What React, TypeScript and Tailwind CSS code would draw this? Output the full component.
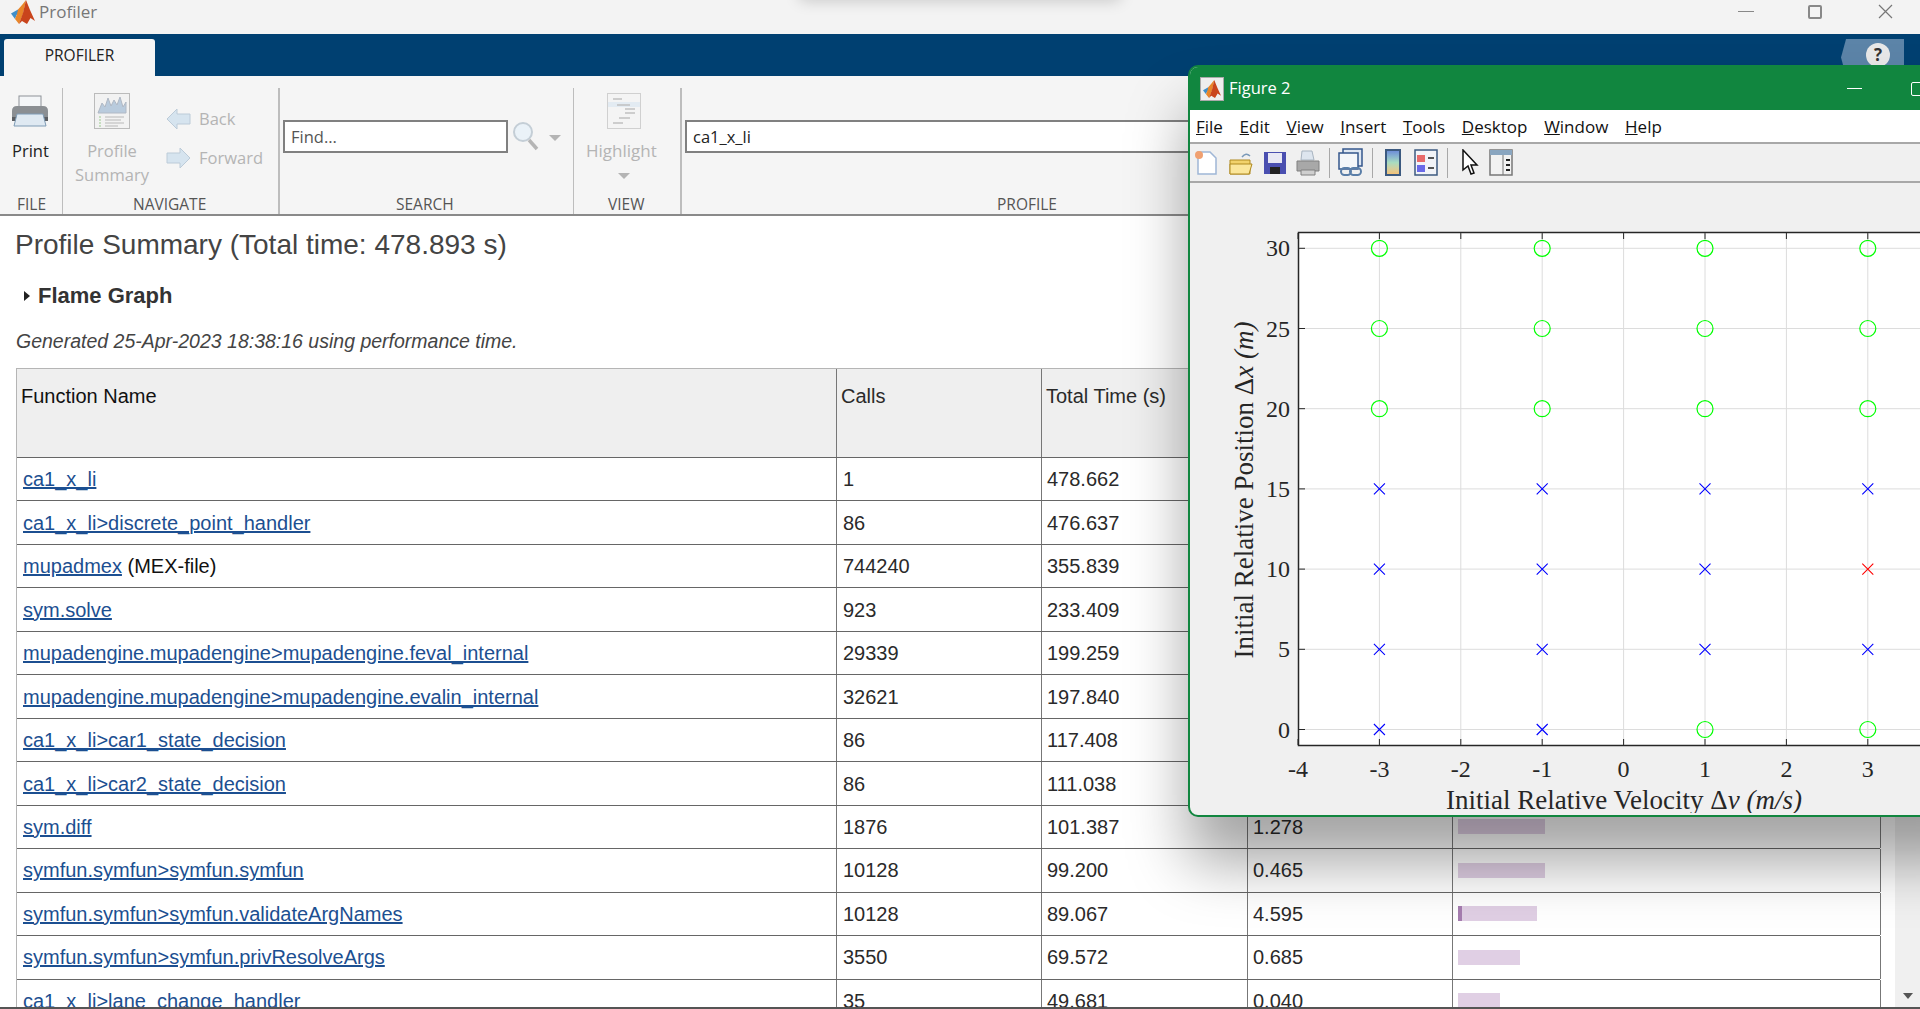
import React from "react";

const rows = [
  { name: "ca1_x_li", calls: "1", total: "478.662" },
  { name: "ca1_x_li>discrete_point_handler", calls: "86", total: "476.637" },
  { name: "mupadmex", suffix: " (MEX-file)", calls: "744240", total: "355.839" },
  { name: "sym.solve", calls: "923", total: "233.409" },
  { name: "mupadengine.mupadengine>mupadengine.feval_internal", calls: "29339", total: "199.259" },
  { name: "mupadengine.mupadengine>mupadengine.evalin_internal", calls: "32621", total: "197.840" },
  { name: "ca1_x_li>car1_state_decision", calls: "86", total: "117.408" },
  { name: "ca1_x_li>car2_state_decision", calls: "86", total: "111.038" },
  { name: "sym.diff", calls: "1876", total: "101.387", self: "1.278", bar: 87, dark: 0 },
  { name: "symfun.symfun>symfun.symfun", calls: "10128", total: "99.200", self: "0.465", bar: 87, dark: 0 },
  { name: "symfun.symfun>symfun.validateArgNames", calls: "10128", total: "89.067", self: "4.595", bar: 79, dark: 4 },
  { name: "symfun.symfun>symfun.privResolveArgs", calls: "3550", total: "69.572", self: "0.685", bar: 62, dark: 0 },
  { name: "ca1_x_li>lane_change_handler", calls: "35", total: "49.681", self: "0.040", bar: 42, dark: 0 },
];

const MatlabLogo = ({ className }: { className: string }) => (
  <svg className={className} viewBox="0 0 24 24">
    <path d="M0 13.5 7 9.5 10 12 5.5 15 4 19Z" fill="#3f8fc9" />
    <path d="M7 9.5 11 5 15 0 12 14 8 24 4 19 6 14Z" fill="#e8862a" />
    <path d="M15 0 19 10 24 21 19.5 18 16 24 11 21 8 24 12 13Z" fill="#c9441c" />
  </svg>
);

const Label = ({ children, className }: { children: React.ReactNode; className: string }) => (
  <div className={`absolute bottom-0 text-[15.5px] leading-5 text-[#555] ${className}`}>{children}</div>
);

const Toolstrip = () => (
  <div className="relative h-[140px] shrink-0 border-b-2 border-[#8a8a8a] bg-[#f5f5f5] font-['Open_Sans',sans-serif]">
    {/* FILE */}
    <div className="absolute left-[62px] top-[12px] h-[126px] w-px bg-[#bdbdbd]" />
    <svg className="absolute left-[11px] top-[19px] h-[33px] w-[38px]" viewBox="0 0 38 33">
      <rect x="8" y="1" width="22" height="12" fill="#f4f6f8" stroke="#8d9298" />
      <path d="M1 16q0-5 5-5h26q5 0 5 5v9H1Z" fill="#8b8f93" />
      <path d="M1 22h36v4H1Z" fill="#5b5e62" />
      <path d="M6 19h26l3 12H3Z" fill="#dfe9f2" stroke="#7e9bb5" />
    </svg>
    <div className="absolute left-[12px] top-[63px] text-[16.5px] leading-6 text-[#222]">Print</div>
    <Label className="left-[17px]">FILE</Label>

    {/* NAVIGATE */}
    <div className="absolute left-[278px] top-[12px] h-[126px] w-[2px] bg-[#bdbdbd]" />
    <svg className="absolute left-[94px] top-[17px] h-[36px] w-[36px]" viewBox="0 0 36 36">
      <rect x="0.5" y="0.5" width="35" height="35" fill="#f2f2f2" stroke="#bbb" />
      <path d="M4 20 8 10 11 14 14 5 17 13 20 7 23 12 26 4 29 14 32 9V20Z" fill="#b9cbdd" stroke="#b0b8c4" />
      <path d="M11 24H30M11 27H27M11 30H30M11 33H24" stroke="#b8b8b8" strokeWidth="1" />
      <path d="M5 24h2M5 27h2M5 30h2M5 33h2" stroke="#b8d8b0" strokeWidth="1.5" />
    </svg>
    <div className="absolute left-[74px] top-[63px] w-[76px] text-center text-[16.5px] leading-6 text-[#b4b4b4]">
      Profile Summary
    </div>
    <svg className="absolute left-[166px] top-[32px] h-[22px] w-[25px]" viewBox="0 0 25 22">
      <path d="M1 11 11 1V6H24V16H11V21Z" fill="#d6e4ef" stroke="#bccbd8" />
    </svg>
    <div className="absolute left-[199px] top-[31px] text-[16.5px] leading-6 text-[#b4b4b4]">Back</div>
    <svg className="absolute left-[166px] top-[71px] h-[22px] w-[25px]" viewBox="0 0 25 22">
      <path d="M24 11 14 1V6H1V16H14V21Z" fill="#d6e4ef" stroke="#bccbd8" />
    </svg>
    <div className="absolute left-[199px] top-[70px] text-[16.5px] leading-6 text-[#b4b4b4]">Forward</div>
    <Label className="left-[133px]">NAVIGATE</Label>

    {/* SEARCH */}
    <div className="absolute left-[283px] top-[44px] flex h-[33px] w-[225px] items-center border-2 border-[#808080] bg-white pl-[6px] pt-[2px] text-[16.5px] text-[#555]">
      Find...
    </div>
    <svg className="absolute left-[512px] top-[44px] h-[32px] w-[28px]" viewBox="0 0 28 32">
      <circle cx="11" cy="12" r="9" fill="#eaf2f8" stroke="#c4ced6" strokeWidth="2" />
      <path d="M17 20 25 29" stroke="#b5b5b5" strokeWidth="3.5" />
    </svg>
    <div className="absolute left-[549px] top-[59px] h-0 w-0 border-x-[6px] border-t-[6px] border-x-transparent border-t-[#b4b4b4]" />
    <div className="absolute left-[573px] top-[12px] h-[126px] w-px bg-[#bdbdbd]" />
    <Label className="left-[396px]">SEARCH</Label>

    {/* VIEW */}
    <svg className="absolute left-[607px] top-[17px] h-[36px] w-[34px]" viewBox="0 0 34 36">
      <rect x="0.5" y="0.5" width="33" height="35" fill="#f4f4f4" stroke="#d0d0d0" />
      <rect x="1" y="9" width="32" height="5" fill="#e3ebf2" />
      <path d="M6 6H15M10 12H23M18 16H28M18 20H28M12 25H23M6 30H16" stroke="#c0c0c0" strokeWidth="1.5" />
    </svg>
    <div className="absolute left-[586px] top-[63px] text-[17px] leading-6 text-[#b4b4b4]">Highlight</div>
    <div className="absolute left-[618px] top-[97px] h-0 w-0 border-x-[6px] border-t-[6px] border-x-transparent border-t-[#b4b4b4]" />
    <div className="absolute left-[680px] top-[12px] h-[126px] w-[2px] bg-[#bdbdbd]" />
    <Label className="left-[608px]">VIEW</Label>

    {/* PROFILE */}
    <div className="absolute left-[685px] top-[44px] flex h-[33px] w-[540px] items-center border-2 border-[#808080] bg-white pl-[6px] pt-[2px] text-[16.5px] text-[#222]">
      ca1_x_li
    </div>
    <Label className="left-[997px]">PROFILE</Label>
  </div>
);

const Table = () => (
  <div className="ml-4 mt-[15px] w-[1864px] border-l border-t border-[#b5b5b5] font-['Liberation_Sans',sans-serif] text-[20px] text-[#2a2a2a]">
    <div className="grid h-[89px] grid-cols-[819px_205px_206px_205px_429px] border-b border-[#666] bg-[#efefef] leading-6">
      <div className="pl-[4px] pt-[15px] text-[#111]">Function Name</div>
      <div className="border-l border-[#777] pl-[4px] pt-[15px]">Calls</div>
      <div className="border-l border-[#777] pl-[4px] pt-[15px]">Total Time (s)</div>
      <div className="border-l border-[#777]" />
      <div className="border-x border-[#777]" />
    </div>
    {rows.map((row) => (
      <div
        key={row.name}
        className="grid h-[43.47px] grid-cols-[819px_205px_206px_205px_429px] border-b border-[#666]"
      >
        <div className="flex items-center pl-[6px]">
          <a className="text-[#1c4f91] underline">{row.name}</a>
          {row.suffix && <span className="whitespace-pre text-[#111]">{row.suffix}</span>}
        </div>
        <div className="flex items-center border-l border-[#777] pl-[6px]">{row.calls}</div>
        <div className="flex items-center border-l border-[#777] pl-[5px]">{row.total}</div>
        <div className="flex items-center border-l border-[#777] pl-[5px]">{row.self}</div>
        <div className="flex items-center border-x border-[#777] pl-[5px]">
          {row.bar && (
            <div className="flex h-[15px] bg-[#e0cfe4]" style={{ width: row.bar }}>
              <div className="bg-[#a67db0]" style={{ width: row.dark }} />
            </div>
          )}
        </div>
      </div>
    ))}
  </div>
);

const xTicks = [-4, -3, -2, -1, 0, 1, 2, 3];
const yTicks = [0, 5, 10, 15, 20, 25, 30];
const px = (v: number) => 1623.6 + v * 81.4;
const py = (v: number) => 729.5 - v * 16.04;

const Chart = () => {
  const markers: { x: number; y: number; kind: "o" | "x" | "r" }[] = [];
  for (const x of [-3, -1, 1, 3]) {
    for (const y of yTicks) {
      let kind: "o" | "x" | "r" = y >= 20 ? "o" : "x";
      if (y === 0 && x > 0) kind = "o";
      if (y === 10 && x === 3) kind = "r";
      markers.push({ x, y, kind });
    }
  }
  return (
    <svg className="block h-[630px] w-[740px]" viewBox="1190 183 740 630">
      <rect x="1298.5" y="232.5" width="640" height="513" fill="#fff" stroke="#262626" strokeWidth="1.5" />
      {xTicks.map((t) => (
        <g key={t}>
          {t !== -4 && <line x1={px(t)} x2={px(t)} y1="233" y2="745" stroke="#dcdcdc" />}
          <line x1={px(t)} x2={px(t)} y1="233" y2="239" stroke="#262626" />
          <line x1={px(t)} x2={px(t)} y1="739" y2="745" stroke="#262626" />
          <text x={px(t)} y="777" textAnchor="middle" fontFamily="Liberation Serif" fontSize="24" fill="#262626">
            {t}
          </text>
        </g>
      ))}
      {yTicks.map((t) => (
        <g key={t}>
          <line x1="1299" x2="1940" y1={py(t)} y2={py(t)} stroke="#dcdcdc" />
          <line x1="1299" x2="1305" y1={py(t)} y2={py(t)} stroke="#262626" />
          <text x="1290" y={py(t) + 8} textAnchor="end" fontFamily="Liberation Serif" fontSize="24" fill="#262626">
            {t}
          </text>
        </g>
      ))}
      {markers.map((m) =>
        m.kind === "o" ? (
          <ellipse key={`${m.x}-${m.y}`} cx={px(m.x)} cy={py(m.y)} rx="8" ry="8" fill="none" stroke="#00ff00" strokeWidth="1.2" />
        ) : (
          <path
            key={`${m.x}-${m.y}`}
            d={`M${px(m.x) - 5.5} ${py(m.y) - 5.5}l11 11m0 -11l-11 11`}
            fill="none"
            stroke={m.kind === "r" ? "#ff0000" : "#0000ff"}
            strokeWidth="1.1"
          />
        ),
      )}
      <text x="1624" y="809" textAnchor="middle" fontFamily="Liberation Serif" fontSize="27" fill="#262626">
        Initial Relative Velocity Δ<tspan fontStyle="italic">v</tspan> <tspan fontStyle="italic">(m/s)</tspan>
      </text>
      <text
        transform="translate(1253 490) rotate(-90)"
        textAnchor="middle"
        fontFamily="Liberation Serif"
        fontSize="27"
        fill="#262626"
      >
        Initial Relative Position Δ<tspan fontStyle="italic">x</tspan> <tspan fontStyle="italic">(m)</tspan>
      </text>
    </svg>
  );
};

const menus = [
  ["F", "ile"],
  ["E", "dit"],
  ["V", "iew"],
  ["I", "nsert"],
  ["T", "ools"],
  ["D", "esktop"],
  ["W", "indow"],
  ["H", "elp"],
];

const FigureToolbar = () => (
  <div className="flex h-[39px] items-center border-b-2 border-[#a8a8a8] bg-[#f0f0f0] pl-[4px]">
    <svg className="h-[26px] w-[26px]" viewBox="0 0 26 26">
      <path d="M4 2H16L22 8V24H4Z" fill="#fff" stroke="#9fb6d6" strokeWidth="1.5" />
      <circle cx="5" cy="5" r="4" fill="#f0a070" />
    </svg>
    <svg className="ml-[8px] h-[26px] w-[26px]" viewBox="0 0 26 26">
      <path d="M2 10H22V24H2Z" fill="#f2d26b" stroke="#b08a20" />
      <path d="M2 14H24L21 24H2Z" fill="#fbe69a" stroke="#b08a20" />
      <path d="M14 7Q18 2 22 6" fill="none" stroke="#7a99b8" strokeWidth="1.5" />
    </svg>
    <svg className="ml-[8px] h-[26px] w-[26px]" viewBox="0 0 26 26">
      <path d="M2 2H24V24H2Z" fill="#4a4fb0" />
      <rect x="6" y="3" width="14" height="10" fill="#e8e8f4" />
      <rect x="8" y="17" width="10" height="7" fill="#222" />
    </svg>
    <svg className="ml-[7px] h-[26px] w-[26px]" viewBox="0 0 26 26">
      <path d="M7 1H17L19 10H6Z" fill="#dde5ee" stroke="#a8b4c0" />
      <path d="M2 11H24V21H2Z" fill="#a8a8a8" stroke="#808080" />
      <path d="M6 20H20V25H6Z" fill="#cfcfcf" stroke="#808080" />
    </svg>
    <div className="ml-[8px] h-[30px] w-px bg-[#a8a8a8]" />
    <svg className="ml-[8px] h-[30px] w-[26px]" viewBox="0 0 26 30">
      <rect x="5" y="1" width="19" height="17" fill="#dfe7f2" stroke="#35578c" strokeWidth="1.5" />
      <rect x="1" y="5" width="19" height="16" fill="#f4f6f9" stroke="#35578c" strokeWidth="1.5" />
      <rect x="3" y="20" width="10" height="7" rx="3.5" fill="none" stroke="#5a7ea8" strokeWidth="2" />
      <rect x="12" y="20" width="11" height="7" rx="3.5" fill="none" stroke="#5a7ea8" strokeWidth="2" />
    </svg>
    <div className="ml-[8px] h-[30px] w-px bg-[#a8a8a8]" />
    <div className="ml-[12px] h-[27px] w-[16px] border-2 border-[#3c5a80] bg-gradient-to-b from-[#6f8fd8] via-[#a8dcc0] to-[#f2c27a]" />
    <svg className="ml-[13px] h-[27px] w-[24px]" viewBox="0 0 24 27">
      <rect x="1" y="1" width="22" height="25" fill="#f2f4f8" stroke="#3c5a80" strokeWidth="1.5" />
      <rect x="3" y="6" width="8" height="7" fill="#e86a6a" />
      <rect x="3" y="16" width="8" height="7" fill="#6a6ae8" />
      <path d="M14 9h6M14 19h6" stroke="#222" strokeWidth="1.5" />
    </svg>
    <div className="ml-[9px] h-[30px] w-px bg-[#a8a8a8]" />
    <svg className="ml-[13px] h-[28px] w-[18px]" viewBox="0 0 18 28">
      <path d="M2 1V21L7 17L10 25L13 24L10 16H16Z" fill="#fff" stroke="#111" strokeWidth="1.5" />
    </svg>
    <svg className="ml-[10px] h-[27px] w-[24px]" viewBox="0 0 24 27">
      <rect x="1" y="1" width="22" height="25" fill="#f2f2f2" stroke="#777" strokeWidth="1.5" />
      <rect x="1" y="1" width="22" height="5" fill="#8aa6c0" />
      <path d="M14 6V26" stroke="#777" />
      <path d="M17 11h4M17 16h4M17 21h4" stroke="#222" strokeWidth="2" />
    </svg>
  </div>
);

const FigureWindow = () => (
  <div className="absolute left-[1188px] top-[65px] h-[752px] w-[800px] overflow-hidden rounded-[10px] border-2 border-[#11863f] bg-[#f0f0f0] shadow-[0_45px_60px_rgba(0,0,0,0.36)]">
    <div className="flex h-[43px] items-center bg-[#11863f] font-['Open_Sans',sans-serif] text-white">
      <div className="ml-[10px] flex h-[24px] w-[24px] items-center justify-center border border-[#aaa] bg-[#eee]">
        <MatlabLogo className="h-[18px] w-[18px]" />
      </div>
      <span className="ml-[5px] text-[16.5px]">Figure 2</span>
      <div className="ml-[556px] h-px w-[15px] bg-white" />
      <div className="ml-[49px] h-[14px] w-[14px] rounded-[2px] border border-white" />
    </div>
    <div className="flex h-[34px] items-center gap-[16.7px] border-b-2 border-[#a8a8a8] bg-white pl-[6px] pt-[2px] font-['Open_Sans',sans-serif] text-[17px] text-[#111]">
      {menus.map(([key, rest]) => (
        <span key={key}>
          <span className="underline">{key}</span>
          {rest}
        </span>
      ))}
    </div>
    <FigureToolbar />
    <Chart />
  </div>
);

export default function App() {
  return (
    <div className="relative flex h-[1009px] w-[1920px] flex-col overflow-hidden bg-white">
      {/* Title bar */}
      <div className="relative flex h-[34px] shrink-0 items-center bg-[#f3f3f3] font-['Open_Sans',sans-serif]">
        <MatlabLogo className="ml-[11px] h-[24px] w-[24px] -translate-y-[5px]" />
        <span className="ml-[4px] -translate-y-[5px] text-[17px] text-[#777]">Profiler</span>
        <div className="absolute left-[800px] top-[-20px] h-[20px] w-[320px] shadow-[0_0_16px_rgba(0,0,0,0.2)]" />
        <div className="absolute left-[1738px] top-[11px] h-px w-[16px] bg-[#888]" />
        <div className="absolute left-[1808px] top-[5px] h-[14px] w-[14px] rounded-[2px] border-2 border-[#888]" />
        <svg className="absolute left-[1878px] top-[4px] h-[15px] w-[15px]" viewBox="0 0 15 15">
          <path d="M1 1 14 14M14 1 1 14" stroke="#777" strokeWidth="1.2" />
        </svg>
      </div>

      {/* Tab band */}
      <div className="relative flex h-[42px] shrink-0 items-end bg-[#004071] pl-1 font-['Open_Sans',sans-serif]">
        <div className="flex h-[37px] w-[151px] items-center justify-center rounded-t-[3px] bg-[#f5f5f5] pb-[4px] text-[15.5px] text-[#222]">
          PROFILER
        </div>
        <div className="absolute left-[1841px] top-[5px] flex h-[37px] w-[63px] items-start bg-[#5c84a8] pl-[25px] pt-[4px] [clip-path:polygon(8%_0,100%_0,100%_100%,8%_100%,0_50%)]">
          <div className="flex h-[24px] w-[24px] items-center justify-center rounded-full bg-[#e8e8e8] text-[17px] font-bold text-[#333]">
            ?
          </div>
        </div>
      </div>

      <Toolstrip />

      {/* Report */}
      <div className="relative min-h-0 flex-1 overflow-hidden border-b-2 border-[#555]">
        <h1 className="ml-[15px] mt-[13px] font-['Liberation_Sans',sans-serif] text-[28px] leading-8 text-[#444]">
          Profile Summary (Total time: 478.893 s)
        </h1>
        <div className="ml-[24px] mt-[23px] flex items-center gap-[8px] font-['Liberation_Sans',sans-serif] text-[22px] font-bold leading-6 text-[#333]">
          <div className="h-0 w-0 border-y-[5px] border-l-[6px] border-y-transparent border-l-[#222]" />
          Flame Graph
        </div>
        <p className="ml-4 mt-[21px] font-['Liberation_Sans',sans-serif] text-[19.5px] italic leading-6 text-[#444]">
          Generated 25-Apr-2023 18:38:16 using performance time.
        </p>
        <Table />
        <div className="absolute right-0 top-0 flex h-full w-[25px] items-end justify-center bg-[#f0f0f0] pb-[8px]">
          <div className="h-0 w-0 border-x-[5px] border-t-[6px] border-x-transparent border-t-[#555]" />
        </div>
      </div>

      <FigureWindow />
    </div>
  );
}
